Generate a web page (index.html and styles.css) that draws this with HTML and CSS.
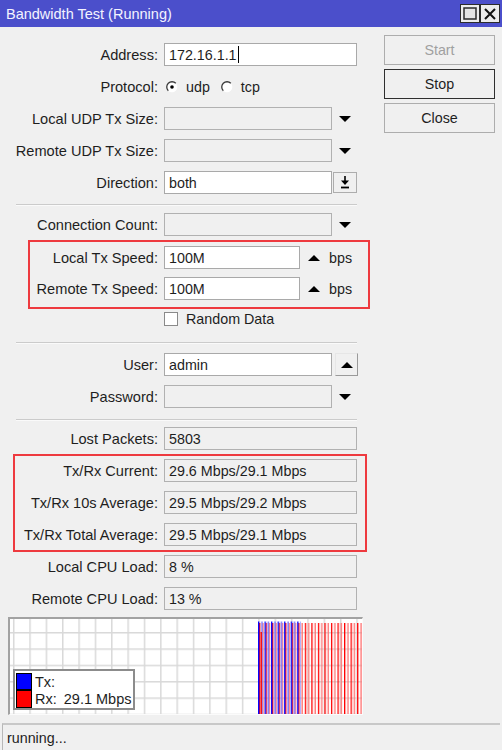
FILE: index.html
```html
<!DOCTYPE html>
<html>
<head>
<meta charset="utf-8">
<title>Bandwidth Test</title>
<link rel="stylesheet" href="styles.css">
</head>
<body>
<div class="window">
  <div class="titlebar">
    <span class="title">Bandwidth Test (Running)</span>
    <div class="tb-btns">
      <span class="tb-btn"><svg width="14" height="13" viewBox="0 0 14 13"><rect x="1" y="1" width="12" height="11" fill="#e4e4e4" stroke="#2a2a2a" stroke-width="1.5"/></svg></span>
      <span class="tb-btn"><svg width="14" height="14" viewBox="0 0 14 14"><path d="M2 2L12 12M12 2L2 12" stroke="#111" stroke-width="2"/></svg></span>
    </div>
  </div>

  <div class="content">
    <div class="form">
      <div class="group">
        <div class="row"><span class="lbl">Address:</span><div class="field edit w-full">172.16.1.1<span class="caret"></span></div></div>
        <div class="row"><span class="lbl">Protocol:</span>
          <div class="radios">
            <span class="radio-item"><svg class="radio" width="12" height="12" viewBox="0 0 12 12"><circle cx="6" cy="6" r="5.3" fill="#fff"/><path d="M2.3 9.8A5.3 5.3 0 0 1 9.8 2.3" fill="none" stroke="#3a3a3a" stroke-width="1.3"/><circle cx="6" cy="6" r="1.8" fill="#000"/></svg>udp</span>
            <span class="radio-item"><svg class="radio" width="12" height="12" viewBox="0 0 12 12"><circle cx="6" cy="6" r="5.3" fill="#fff"/><path d="M2.3 9.8A5.3 5.3 0 0 1 9.8 2.3" fill="none" stroke="#3a3a3a" stroke-width="1.3"/></svg>tcp</span>
          </div>
        </div>
        <div class="row"><span class="lbl">Local UDP Tx Size:</span><div class="field ro w-combo"></div><span class="tri-down"></span></div>
        <div class="row"><span class="lbl">Remote UDP Tx Size:</span><div class="field ro w-combo"></div><span class="tri-down"></span></div>
        <div class="row"><span class="lbl">Direction:</span><div class="field edit w-combo">both</div>
          <span class="mini-btn"><svg width="10" height="13" viewBox="0 0 10 13"><path d="M5 0V5" stroke="#000" stroke-width="1.6"/><path d="M1 4.5H9L5 9Z" fill="#000"/><path d="M1 11.5H9" stroke="#000" stroke-width="1.8"/></svg></span>
        </div>
      </div>

      <div class="sep sep-a"></div>

      <div class="row"><span class="lbl">Connection Count:</span><div class="field ro w-combo"></div><span class="tri-down"></span></div>

      <div class="hl hl-speed">
        <div class="row"><span class="lbl">Local Tx Speed:</span><div class="field edit w-speed">100M</div><span class="tri-up spd"></span><span class="unit">bps</span></div>
        <div class="row"><span class="lbl">Remote Tx Speed:</span><div class="field edit w-speed">100M</div><span class="tri-up spd"></span><span class="unit">bps</span></div>
      </div>

      <div class="check-row"><span class="checkbox"></span>Random Data</div>

      <div class="sep sep-b"></div>

      <div class="group">
        <div class="row"><span class="lbl">User:</span><div class="field edit w-combo">admin</div><span class="mini-btn raised"><span class="tri-up"></span></span></div>
        <div class="row"><span class="lbl">Password:</span><div class="field ro w-combo"></div><span class="tri-down"></span></div>
      </div>

      <div class="sep sep-c"></div>

      <div class="row"><span class="lbl">Lost Packets:</span><div class="field ro w-full">5803</div></div>

      <div class="hl hl-rate">
        <div class="row"><span class="lbl">Tx/Rx Current:</span><div class="field ro w-full">29.6 Mbps/29.1 Mbps</div></div>
        <div class="row"><span class="lbl">Tx/Rx 10s Average:</span><div class="field ro w-full">29.5 Mbps/29.2 Mbps</div></div>
        <div class="row"><span class="lbl">Tx/Rx Total Average:</span><div class="field ro w-full">29.5 Mbps/29.1 Mbps</div></div>
      </div>

      <div class="group cpu">
        <div class="row"><span class="lbl">Local CPU Load:</span><div class="field ro w-full">8 %</div></div>
        <div class="row"><span class="lbl">Remote CPU Load:</span><div class="field ro w-full">13 %</div></div>
      </div>

      <div class="graph">
        <svg class="chart" width="352" height="95" viewBox="0 0 352 95">
          <defs>
            <pattern id="grid" x="19.3" y="13" width="16.35" height="16.35" patternUnits="userSpaceOnUse">
              <rect x="0" y="0" width="1.5" height="16.35" fill="#d9d9d9"/>
              <rect x="0" y="0" width="16.35" height="1.5" fill="#d9d9d9"/>
            </pattern>
            <pattern id="red" x="249" y="0" width="6.54" height="95" patternUnits="userSpaceOnUse">
              <rect x="0" y="0" width="1.3" height="95" fill="#ff0000"/>
              <rect x="3.27" y="0" width="1.3" height="95" fill="#ff6e6e"/>
            </pattern>
            <pattern id="blue" x="248" y="0" width="6.54" height="95" patternUnits="userSpaceOnUse">
              <rect x="0" y="0" width="1.3" height="95" fill="#0000ff"/>
              <rect x="3.27" y="0" width="1.3" height="95" fill="#6a6aff"/>
            </pattern>
          </defs>
          <rect x="0" y="0" width="352" height="95" fill="#fff"/>
          <rect x="0" y="0" width="352" height="95" fill="url(#grid)"/>
          <rect x="249" y="4" width="103" height="91" fill="url(#red)"/>
          <rect x="248" y="2.5" width="43" height="92.5" fill="url(#blue)"/>
          <rect x="250.6" y="13" width="1.3" height="82" fill="#ff0000"/>
        </svg>
        <div class="legend">
          <div class="lg-row"><span class="sw sw-tx"></span>Tx:</div>
          <div class="lg-row"><span class="sw sw-rx"></span>Rx:<span class="lg-val">29.1 Mbps</span></div>
        </div>
      </div>
    </div>

    <div class="side">
      <div class="btn disabled">Start</div>
      <div class="btn default">Stop</div>
      <div class="btn">Close</div>
    </div>
  </div>

  <div class="status">running...</div>
</div>
</body>
</html>
```

FILE: styles.css
```css
html, body {
  margin: 0;
  padding: 0;
}

body {
  background: #f0f0f0;
  font-family: "Liberation Sans", Arial, sans-serif;
  font-size: 14.3px;
  color: #1e1e1e;
}

.window {
  width: 502px;
  height: 750px;
  display: flex;
  flex-direction: column;
  overflow: hidden;
}

/* title bar */
.titlebar {
  height: 27px;
  flex: none;
  box-sizing: border-box;
  background: #4b4fcb;
  color: #f3f3ff;
  display: flex;
  align-items: center;
  justify-content: space-between;
  padding: 0 2px 0 6px;
}

.title {
  font-size: 14.5px;
}

.tb-btns {
  display: flex;
}

.tb-btn {
  width: 20px;
  height: 19px;
  box-sizing: border-box;
  border: 1px solid #2b2b2b;
  background: #ececec;
  display: flex;
  align-items: center;
  justify-content: center;
}

/* content */
.content {
  flex: 1;
  display: flex;
  min-height: 0;
}

.form {
  width: 370px;
  flex: none;
  padding-top: 16px;
  box-sizing: border-box;
}

.group {
  display: flex;
  flex-direction: column;
  gap: 9px;
}

.row {
  display: flex;
  align-items: center;
  height: 23px;
}

.lbl {
  width: var(--lw, 158px);
  flex: none;
  text-align: right;
  margin-right: 6px;
  white-space: nowrap;
  font-size: 14.6px;
}

.field {
  height: 23px;
  box-sizing: border-box;
  border: 1px solid #a9a9a9;
  display: flex;
  align-items: center;
  padding-left: 4px;
  white-space: nowrap;
  flex: none;
}

.edit {
  background: #ffffff;
}

.ro {
  background: #f0f0f0;
  border-color: #b1b1b1;
}

.w-full { width: 193px; }
.w-combo { width: 168px; }
.w-speed { width: 136px; }

.caret {
  display: inline-block;
  width: 1px;
  height: 17px;
  background: #000;
  margin-left: 1px;
}

.tri-down {
  width: 0;
  height: 0;
  border-left: 6.5px solid transparent;
  border-right: 6.5px solid transparent;
  border-top: 6px solid #000;
  margin-left: 7px;
}

.tri-up {
  width: 0;
  height: 0;
  border-left: 6.5px solid transparent;
  border-right: 6.5px solid transparent;
  border-bottom: 6px solid #000;
}

.tri-up.spd {
  margin-left: 8px;
}

.unit {
  margin-left: 9px;
}

.mini-btn {
  width: 24px;
  height: 21px;
  box-sizing: border-box;
  margin-left: 1px;
  border: 1px solid #adadad;
  background: #f0f0f0;
  display: flex;
  align-items: center;
  justify-content: center;
}

.mini-btn.raised {
  width: 23px;
  height: 23px;
  margin-left: 3px;
  border-color: #e6e6e6 #9a9a9a #9a9a9a #e6e6e6;
}

/* radios */
.radios {
  display: flex;
  align-items: center;
  margin-left: 2px;
}

.radio-item {
  display: flex;
  align-items: center;
  gap: 8px;
  margin-right: 11px;
}

.radio {
  display: block;
}

/* separators */
.sep {
  width: 341px;
  height: 0;
  border-top: 1px solid #cbcbcb;
  border-bottom: 1px solid #fafafa;
  margin-left: 16px;
}

.sep-a { margin-top: 10px; margin-bottom: 7px; }
.sep-b { margin-top: 15px; margin-bottom: 9px; }
.sep-c { margin-top: 11px; margin-bottom: 6px; }

/* highlighted boxes */
.hl {
  border: 2px solid #ee3a3f;
  box-sizing: border-box;
  display: flex;
  flex-direction: column;
}

.hl-speed {
  margin: 4px 0 0 28px;
  width: 342px;
  padding: 4px 0 7px;
  gap: 8px;
  --lw: 128px;
}

.hl-rate {
  margin: 4px 0 0 13px;
  width: 354px;
  padding: 3px 0 4px;
  gap: 9px;
  --lw: 143px;
}

.check-row {
  display: flex;
  align-items: center;
  height: 16px;
  margin-top: 2px;
  padding-left: 164px;
}

.checkbox {
  width: 14px;
  height: 14px;
  box-sizing: border-box;
  border: 1px solid #8a8a8a;
  background: #fff;
  margin-right: 8px;
}

.cpu {
  margin-top: 3px;
}

/* graph */
.graph {
  position: relative;
  margin: 7px 0 0 8px;
  width: 355px;
  height: 98px;
  box-sizing: border-box;
  border-top: 2px solid #a2a2a2;
  border-left: 2px solid #a2a2a2;
  border-right: 1px solid #fbfbfb;
  border-bottom: 1px solid #fbfbfb;
  background: #fff;
}

.chart {
  display: block;
}

.legend {
  position: absolute;
  left: 3px;
  top: 50px;
  width: 122px;
  height: 41px;
  box-sizing: border-box;
  border: 2px solid #8c8c8c;
  background: #fff;
  padding: 2px 0 0 1px;
  font-size: 14.5px;
}

.lg-row {
  display: flex;
  align-items: center;
}

.lg-val {
  margin-left: 7px;
}

.sw {
  width: 16px;
  box-sizing: border-box;
  border: 1px solid #000;
  margin-right: 3px;
}

.sw-tx {
  height: 17px;
  background: #0000ff;
}

.sw-rx {
  height: 18px;
  background: #ff0000;
}

/* side buttons */
.side {
  padding-top: 8px;
  margin-left: 14px;
  display: flex;
  flex-direction: column;
  gap: 4px;
}

.btn {
  width: 111px;
  height: 30px;
  box-sizing: border-box;
  border: 1px solid #adadad;
  background: #f0f0f0;
  display: flex;
  align-items: center;
  justify-content: center;
}

.btn.disabled {
  color: #a0a0a0;
}

.btn.default {
  border-color: #2f2f2f;
}

/* status bar */
.status {
  height: 27px;
  flex: none;
  box-sizing: border-box;
  margin: 0 2px;
  border-top: 2px solid #c8c8c8;
  border-left: 1px solid #b8b8b8;
  padding-left: 4px;
  display: flex;
  align-items: center;
}
```
